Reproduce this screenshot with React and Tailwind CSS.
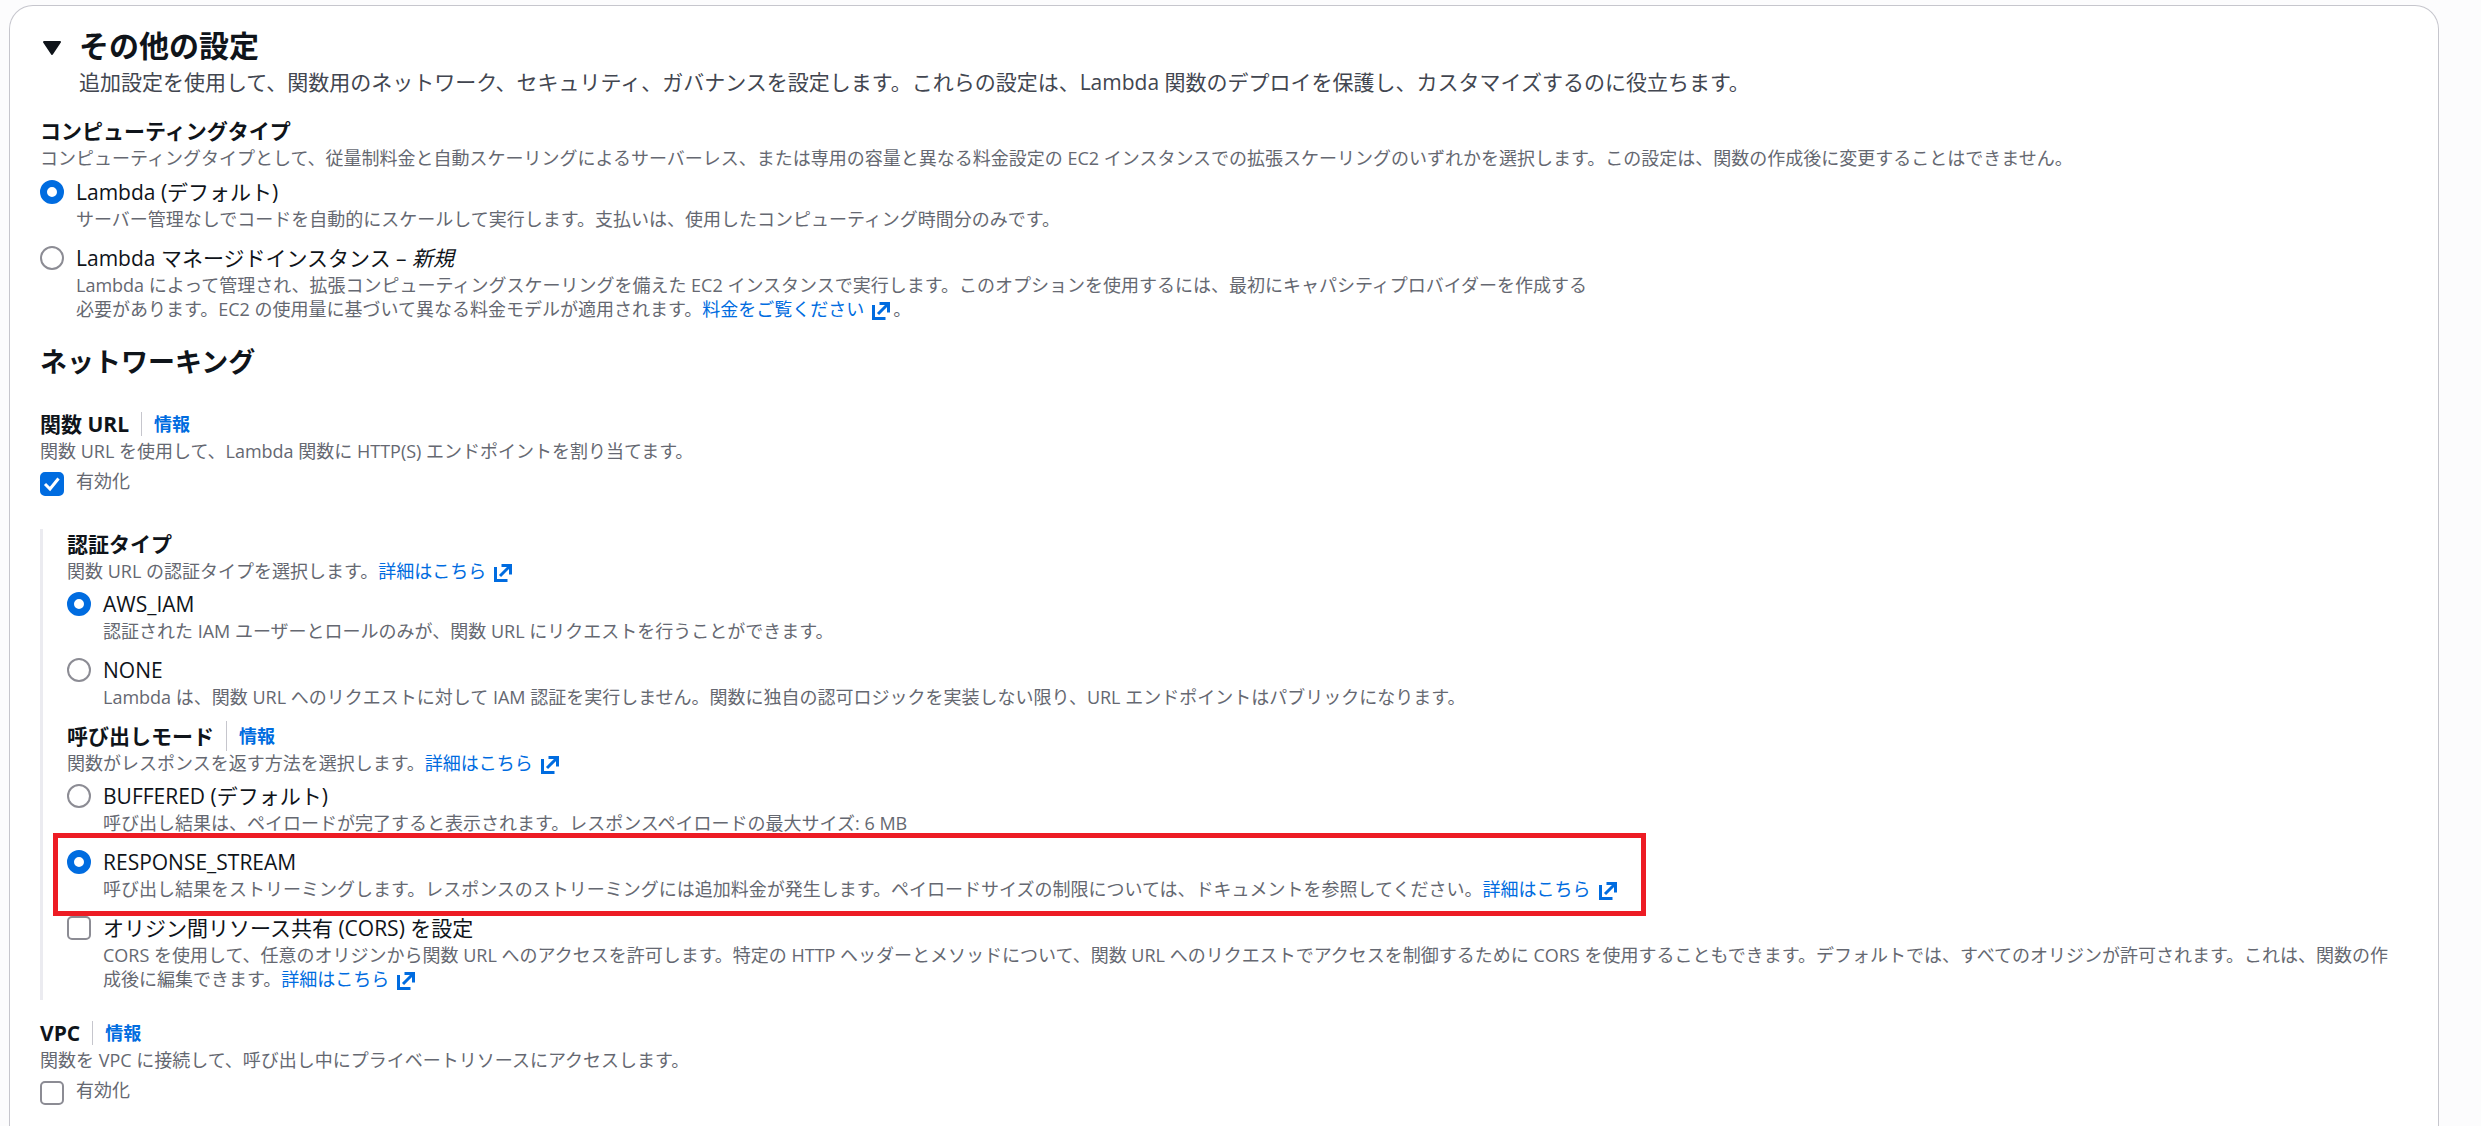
import React from "react";

const ExternalIcon = () => (
  <svg
    viewBox="0 0 16 16"
    className="-my-1 ml-[5px] inline-block size-6 align-middle"
    fill="none"
    stroke="currentColor"
    strokeWidth="2"
    role="img"
    aria-label="新しいタブで開く"
  >
    <path d="M3 4v9h8" />
    <path d="M7 3h6v6" />
    <path d="M6 10 13 3" />
  </svg>
);

const ExtLink = ({ children }) => (
  <a href="#" className="text-[#006ce0]">
    {children}
    <ExternalIcon />
  </a>
);

const Radio = ({ name, id, label, desc, checked }) => (
  <div className="flex gap-3">
    <input
      type="radio"
      id={id}
      name={name}
      defaultChecked={checked}
      className="mt-[3px] size-6 shrink-0 appearance-none rounded-full border-2 border-[#8c8c94] bg-white checked:border-[7px] checked:border-[#006ce0]"
    />
    <div>
      <label htmlFor={id} className="block text-[21px] leading-[30px] text-[#0f141a]">
        {label}
      </label>
      <p className="text-[18px] leading-6 text-[#656871]">{desc}</p>
    </div>
  </div>
);

const Checkbox = ({ id, checked, className = "" }) => (
  <span className={"relative flex size-6 shrink-0 " + className}>
    <input
      type="checkbox"
      id={id}
      defaultChecked={checked}
      className="peer size-6 appearance-none rounded-[5px] border-2 border-[#8c8c94] bg-white checked:border-[#006ce0] checked:bg-[#006ce0]"
    />
    <svg
      viewBox="0 0 24 24"
      className="pointer-events-none absolute inset-0 hidden size-6 peer-checked:block"
      fill="none"
      stroke="white"
      strokeWidth="3"
      aria-hidden="true"
    >
      <path d="M5 12 10 17 18.500 6.500" />
    </svg>
  </span>
);

const Title = ({ children, info, tall }) => (
  <div className="flex h-[30px] items-center">
    <span className="text-[21px] leading-[30px] font-bold text-[#0f141a]">{children}</span>
    {info && (
      <a
        href="#"
        className={
          "ml-3 flex items-center border-l border-[#c6c6cd] pl-3 text-[18px] font-bold text-[#006ce0] " +
          (tall ? "h-[30px]" : "h-6")
        }
      >
        情報
      </a>
    )}
  </div>
);

const Hint = ({ children }) => <p className="text-[18px] leading-6 text-[#656871]">{children}</p>;

const Enable = ({ id, checked }) => (
  <div className="mt-[6px] flex gap-3">
    <Checkbox id={id} checked={checked} className="mt-[3px]" />
    <label htmlFor={id} className="text-[18px] leading-6 text-[#656871]">
      有効化
    </label>
  </div>
);

export default function App() {
  return (
    <div
      lang="ja"
      className="min-h-screen overflow-hidden bg-[#fcfcfd] pt-[5px] pr-[42px] pl-[9px] font-['Open_Sans','Noto_Sans_CJK_JP',sans-serif]"
    >
      <main className="-mb-[80px] min-h-[1200px] rounded-t-3xl border border-b-0 border-[#c6c6cd] bg-white pt-[22px] pr-9 pl-[30px]">
        <header className="flex">
          <button type="button" aria-label="その他の設定を折りたたむ" className="mt-[5px] flex h-[30px] w-[39px] items-center">
            <svg viewBox="0 0 24 24" className="size-6" fill="#0f141a" stroke="#0f141a" strokeWidth="2" strokeLinejoin="round">
              <path d="M4 6h16l-8 12z" />
            </svg>
          </button>
          <div>
            <h2 className="text-[30px] leading-9 font-bold text-[#0f141a]">その他の設定</h2>
            <p className="mt-[3px] text-[21px] leading-[30px] text-[#424650]">
              追加設定を使用して、関数用のネットワーク、セキュリティ、ガバナンスを設定します。これらの設定は、Lambda 関数のデプロイを保護し、カスタマイズするのに役立ちます。
            </p>
          </div>
        </header>

        <section className="mt-[19px]">
          <Title>コンピューティングタイプ</Title>
          <Hint>
            コンピューティングタイプとして、従量制料金と自動スケーリングによるサーバーレス、または専用の容量と異なる料金設定の EC2 インスタンスでの拡張スケーリングのいずれかを選択します。この設定は、関数の作成後に変更することはできません。
          </Hint>
          <div className="mt-[7px] flex flex-col gap-3">
            <Radio
              name="compute"
              id="lambda-default"
              checked
              label="Lambda (デフォルト)"
              desc="サーバー管理なしでコードを自動的にスケールして実行します。支払いは、使用したコンピューティング時間分のみです。"
            />
            <Radio
              name="compute"
              id="lambda-managed"
              label={
                <>
                  Lambda マネージドインスタンス – <i>新規</i>
                </>
              }
              desc={
                <>
                  Lambda によって管理され、拡張コンピューティングスケーリングを備えた EC2 インスタンスで実行します。このオプションを使用するには、最初にキャパシティプロバイダーを作成する
                  <br />
                  必要があります。EC2 の使用量に基づいて異なる料金モデルが適用されます。<ExtLink>料金をご覧ください</ExtLink>。
                </>
              }
            />
          </div>
        </section>

        <h3 className="mt-6 text-[27px] leading-[33px] font-bold text-[#0f141a]">ネットワーキング</h3>

        <section className="mt-[31px]">
          <Title info>関数 URL</Title>
          <Hint>関数 URL を使用して、Lambda 関数に HTTP(S) エンドポイントを割り当てます。</Hint>
          <Enable id="url-enable" checked />
        </section>

        <div className="mt-[33px] flex flex-col border-l-[3px] border-[#ebebf0] pb-[9px] pl-6">
          <section>
            <Title>認証タイプ</Title>
            <Hint>
              関数 URL の認証タイプを選択します。<ExtLink>詳細はこちら</ExtLink>
            </Hint>
            <div className="mt-[6px] flex flex-col gap-3">
              <Radio
                name="auth"
                id="auth-iam"
                checked
                label="AWS_IAM"
                desc="認証された IAM ユーザーとロールのみが、関数 URL にリクエストを行うことができます。"
              />
              <Radio
                name="auth"
                id="auth-none"
                label="NONE"
                desc="Lambda は、関数 URL へのリクエストに対して IAM 認証を実行しません。関数に独自の認可ロジックを実装しない限り、URL エンドポイントはパブリックになります。"
              />
            </div>
          </section>

          <section className="mt-3">
            <Title info tall>
              呼び出しモード
            </Title>
            <Hint>
              関数がレスポンスを返す方法を選択します。<ExtLink>詳細はこちら</ExtLink>
            </Hint>
            <div className="mt-[6px] flex flex-col gap-3">
              <Radio
                name="invoke"
                id="invoke-buffered"
                label="BUFFERED (デフォルト)"
                desc="呼び出し結果は、ペイロードが完了すると表示されます。レスポンスペイロードの最大サイズ: 6 MB"
              />
              <div className="relative w-fit">
                <Radio
                  name="invoke"
                  id="invoke-stream"
                  checked
                  label="RESPONSE_STREAM"
                  desc={
                    <>
                      呼び出し結果をストリーミングします。レスポンスのストリーミングには追加料金が発生します。ペイロードサイズの制限については、ドキュメントを参照してください。
                      <ExtLink>詳細はこちら</ExtLink>
                    </>
                  }
                />
                <div className="pointer-events-none absolute -top-[14px] -right-[26px] -bottom-[15px] -left-[14px] border-[5px] border-[#ed1c24]" />
              </div>
            </div>
          </section>

          <div className="mt-3 flex gap-3">
            <Checkbox id="cors" className="mt-[3px]" />
            <div>
              <label htmlFor="cors" className="block text-[21px] leading-[30px] text-[#0f141a]">
                オリジン間リソース共有 (CORS) を設定
              </label>
              <Hint>
                CORS を使用して、任意のオリジンから関数 URL へのアクセスを許可します。特定の HTTP ヘッダーとメソッドについて、関数 URL へのリクエストでアクセスを制御するために CORS を使用することもできます。デフォルトでは、すべてのオリジンが許可されます。これは、関数の作成後に編集できます。<ExtLink>詳細はこちら</ExtLink>
              </Hint>
            </div>
          </div>
        </div>

        <section className="mt-[18px]">
          <Title info>VPC</Title>
          <Hint>関数を VPC に接続して、呼び出し中にプライベートリソースにアクセスします。</Hint>
          <Enable id="vpc-enable" />
        </section>
      </main>
    </div>
  );
}
